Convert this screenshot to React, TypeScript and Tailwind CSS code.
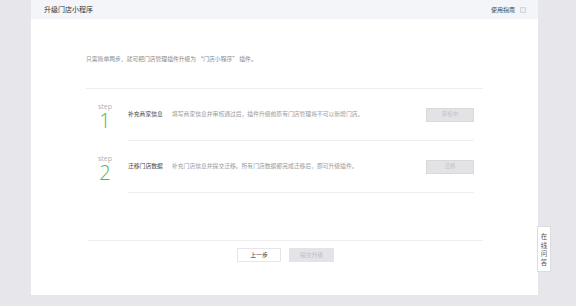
const font = "font-['Noto_Sans_CJK_SC','Noto_Sans',sans-serif]";

interface StepProps {
  num: number;
  title: string;
  desc: string;
  action: string;
}

const StepRow: React.FC<StepProps> = ({ num, title, desc, action }) => {
  return (
    <div className="flex h-[52px]">
      <div className="w-[38px] flex flex-col items-center justify-center pt-[1px]">
        <span className="text-[7px] leading-[7px] text-[#b0b0b0] font-['Open_Sans',sans-serif]">
          step
        </span>
        <span className="mt-[2px] text-[20px] leading-[17px] text-[#4cb551] font-light font-['Open_Sans',sans-serif]">
          {num}
        </span>
      </div>
      <div className="ml-[4px] w-[346px] flex items-center border-b border-[#eeeef1]">
        <span className="text-[5.8px] text-[#444] w-[44px]">{title}</span>
        <span className="text-[5.8px] text-[#9a9a9a] flex-1">{desc}</span>
        <span className="w-[48px] h-[14px] flex items-center justify-center bg-[#e3e3e6] border border-[#d9d9dd] text-[5.5px] text-[#c2c2c6]">
          {action}
        </span>
      </div>
    </div>
  );
};

export default function App() {
  return (
    <div className={`relative w-[576px] h-[306px] bg-[#e7e7eb] ${font} overflow-hidden`}>
      <div className="ml-[31px] w-[507px] h-[295px] bg-white flex flex-col">
        <div className="h-[19px] bg-[#f4f5f9] flex items-center justify-between pl-[13px] pr-[12px]">
          <span className="text-[7px] text-[#333]">升级门店小程序</span>
          <div className="flex items-center gap-[5px]">
            <span className="text-[6px] text-[#444]">使用指南</span>
            <span className="w-[6px] h-[6px] border border-[#d6d6da] bg-[#eeeef1]" />
          </div>
        </div>
        <div className="pl-[55px] pr-[55px] flex-1 flex flex-col">
          <p className="mt-[36px] text-[5.8px] leading-[8px] text-[#8a8a8a]">
            只需简单两步，就可把门店管理插件升级为 “门店小程序” 插件。
          </p>
          <div className="mt-[25px] border-t border-[#eeeef1]">
            <StepRow
              num={1}
              title="补充商家信息"
              desc="填写商家信息并审核通过后，插件升级前原有门店管理将不可以新增门店。"
              action="审核中"
            />
            <StepRow
              num={2}
              title="迁移门店数据"
              desc="补充门店信息并提交迁移。所有门店数据都完成迁移后，即可升级插件。"
              action="迁移"
            />
          </div>
          <div className="mt-[47px] ml-[2px] border-t border-[#eeeef1] flex justify-center gap-[8px] pt-[7px]">
            <span className="w-[44px] h-[14px] flex items-center justify-center border border-[#e6e6ea] text-[5.8px] text-[#333]">
              上一步
            </span>
            <span className="w-[45px] h-[14px] flex items-center justify-center bg-[#e4e4e8] text-[5.8px] text-[#bdbdc2]">
              提交升级
            </span>
          </div>
        </div>
      </div>
      <div className="absolute left-[537px] top-[226px] w-[14px] h-[46px] bg-white border border-[#dcdce0] flex flex-col items-center justify-center text-[6.5px] leading-[8.5px] text-[#555]">
        <span>在</span>
        <span>线</span>
        <span>问</span>
        <span>答</span>
      </div>
    </div>
  );
}
